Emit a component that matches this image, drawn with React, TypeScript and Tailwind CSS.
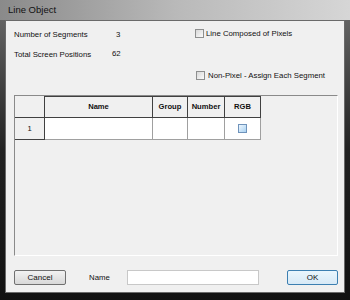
import { useState } from "react";

const font = { fontFamily: '"Liberation Sans", Arial, sans-serif' };

function Check({ blue }: { blue?: boolean }) {
  return (
    <span
      className={
        blue
          ? "inline-block w-[9px] h-[9px] border border-[#6f93bb] bg-gradient-to-br from-[#eef6fd] to-[#a9d2f2]"
          : "inline-block w-[9px] h-[9px] border border-[#8e8f8f] bg-gradient-to-br from-[#d8d8d8] to-[#fbfbfb]"
      }
    />
  );
}

export default function App() {
  const [name, setName] = useState("");

  const headers = ["Name", "Group", "Number", "RGB"];

  return (
    <div
      className="w-[350px] h-[300px] flex flex-col overflow-hidden bg-gradient-to-b from-[#6e6e6e] via-[#222] to-[#111]"
      style={font}
    >
      {/* title bar */}
      <div className="h-[20px] shrink-0 flex items-center pl-[8px] bg-gradient-to-r from-[#8a8a8a] via-[#b9b9b9] to-[#d6d6d6]">
        <span className="text-[9.5px] text-[#111]">Line Object</span>
      </div>

      <div className="flex flex-1 px-[5px] pb-[7px]">
        <div className="flex-1 flex flex-col bg-[#f0f0f0] border border-[#6a6a6a] pl-[8px] pr-[6px] text-[7.8px] text-[#111]">
          {/* top fields */}
          <div className="relative h-[74px]">
            <div className="absolute left-[0px] top-[8px]">Number of Segments</div>
            <div className="absolute left-[102px] top-[8px]">3</div>
            <div className="absolute left-[0px] top-[28px]">Total Screen Positions</div>
            <div className="absolute left-[98px] top-[27px]">62</div>
            <div className="absolute left-[181px] top-[7px] flex items-center gap-[2px]">
              <Check />
              <span>Line Composed of Pixels</span>
            </div>
            <div className="absolute left-[182px] top-[49px] flex items-center gap-[3px]">
              <Check />
              <span>Non-Pixel - Assign Each Segment</span>
            </div>
          </div>

          {/* grid panel */}
          <div className="h-[161px] border-t border-l border-[#8a8a8a] border-r border-b border-r-[#ffffff] border-b-[#ffffff] bg-[#f0f0f0]">
            <div className="grid grid-cols-[30px_108px_35px_37px_36px] w-fit">
              <div className="h-[22px] border-r border-b border-[#404040] bg-[#f0f0f0]" />
              {headers.map((h) => (
                <div
                  key={h}
                  className="h-[22px] flex items-center justify-center border-r border-b border-t border-[#404040] font-bold text-[7.6px] bg-[#f0f0f0]"
                >
                  {h}
                </div>
              ))}
              <div className="h-[22px] flex items-center justify-center border-r border-b border-[#404040] bg-[#f0f0f0] text-[7.6px]">
                1
              </div>
              <div className="h-[22px] bg-white border-r border-b border-[#a0a0a0]" />
              <div className="h-[22px] bg-white border-r border-b border-[#a0a0a0]" />
              <div className="h-[22px] bg-white border-r border-b border-[#a0a0a0]" />
              <div className="h-[22px] bg-white border-r border-b border-[#a0a0a0] flex items-center justify-center">
                <Check blue />
              </div>
            </div>
          </div>

          {/* bottom bar */}
          <div className="flex items-center mt-[14px]">
            <button className="w-[52px] h-[15px] border border-[#707070] rounded-[2px] bg-gradient-to-b from-[#f2f2f2] to-[#d8d8d8] text-[8px] text-[#111] leading-none">
              Cancel
            </button>
            <span className="ml-[23px] text-[7.8px]">Name</span>
            <input
              value={name}
              onChange={(e) => setName(e.target.value)}
              className="ml-[17px] w-[132px] h-[15px] bg-white border border-[#c8c8c8] outline-none text-[8px] px-1"
            />
            <button className="ml-auto w-[51px] h-[15px] border border-[#3c7fb1] rounded-[2px] bg-gradient-to-b from-[#eaf6fd] to-[#d7e9f6] text-[8px] text-[#111] leading-none">
              OK
            </button>
          </div>
        </div>
      </div>
    </div>
  );
}
